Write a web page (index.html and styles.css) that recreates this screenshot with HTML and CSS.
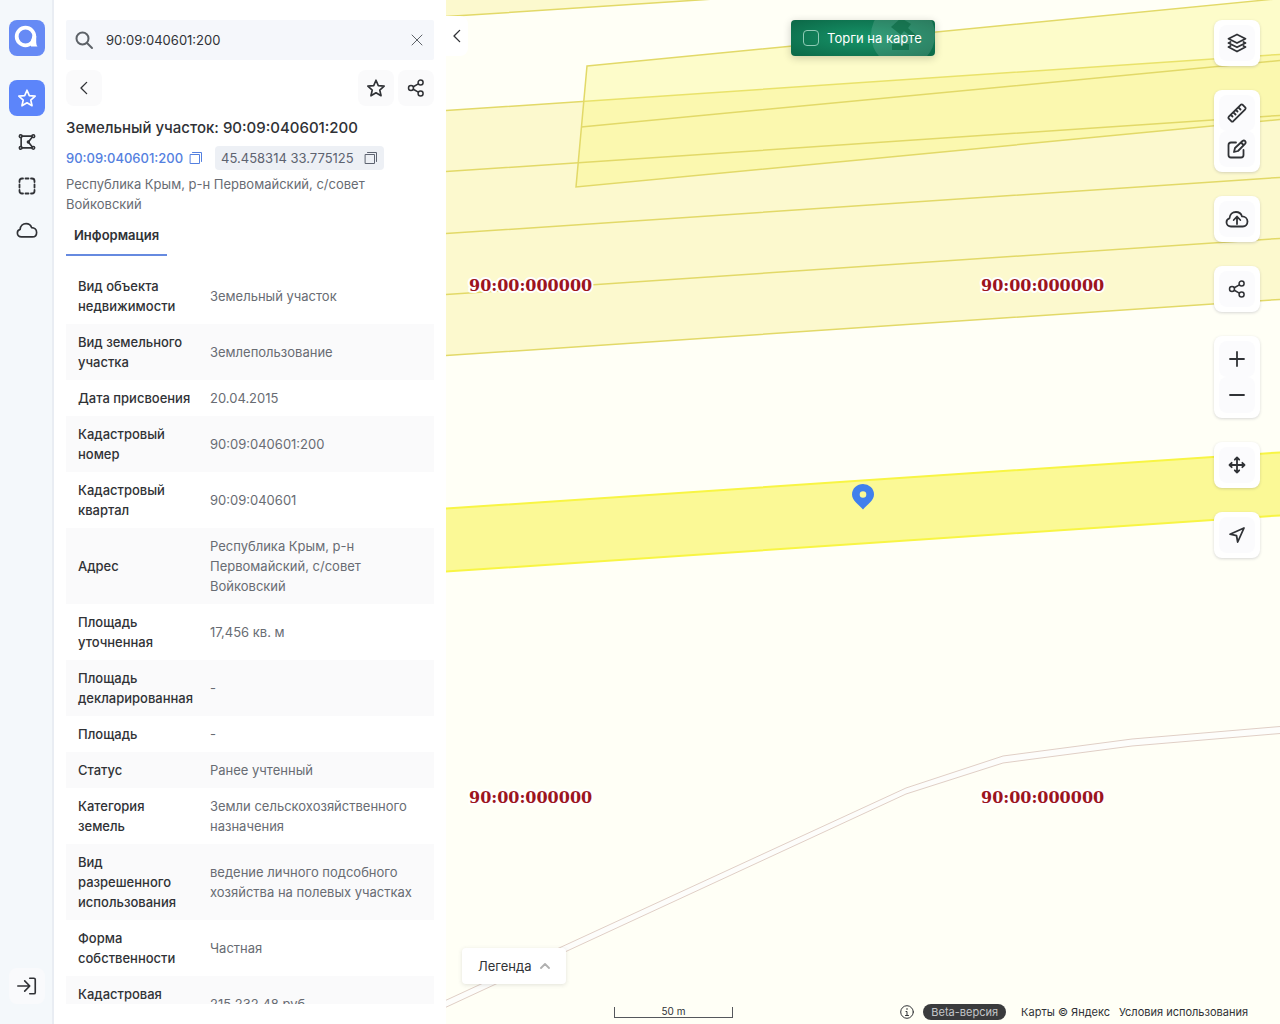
FILE: index.html
```html
<!DOCTYPE html>
<html lang="ru">
<head>
<meta charset="utf-8">
<meta name="viewport" content="width=device-width, initial-scale=1">
<title>Земельный участок: 90:09:040601:200</title>
<link rel="stylesheet" href="styles.css">
</head>
<body>
<svg class="sprite" aria-hidden="true">
  <symbol id="i-star" viewBox="0 0 24 24"><path d="M12 3.500l2.500 5.900 6.400.600-4.800 4.200 1.400 6.300L12 17.200 6.500 20.500l1.400-6.300L3.100 10l6.400-.6z"/></symbol>
  <symbol id="i-share" viewBox="0 0 24 24"><circle cx="6" cy="12" r="3"/><circle cx="17.500" cy="5.500" r="3"/><circle cx="17.500" cy="18.500" r="3"/><path d="M8.700 10.500l6.100-3.500M8.700 13.500l6.100 3.500"/></symbol>
  <symbol id="i-copy" viewBox="0 0 14 14"><path d="M1.500 3.500h9v9h-9zM3.500 1.500h9v9"/></symbol>
  <symbol id="i-cloud" viewBox="0 0 24 24"><path d="M6 19.500c-2.600 0-4.500-1.700-4.500-4.200 0-2 1.200-3.500 3-4C4.800 7.500 7.500 5 11 5c3 0 5.200 1.800 6 4.400 3 0 5.500 2.200 5.500 5.200 0 2.900-2 4.900-4.700 4.900z"/></symbol>
  <symbol id="i-left" viewBox="0 0 24 24"><path d="M15.500 4.500L8 12l7.500 7.500"/></symbol>
</svg>

<nav class="rail" aria-label="Разделы">
  <a class="rail-logo" href="#" aria-label="Главная">
    <svg viewBox="0 0 36 36" width="36" height="36"><circle cx="16.500" cy="16.500" r="8.800" fill="none" stroke="#fff" stroke-width="3.800"/><path d="M23.500 16h3.700v6.500q0 2.500 1.300 4h-6.500l-1-3z" fill="#fff"/></svg>
  </a>
  <button class="rail-btn active" aria-label="Избранное"><svg class="icon i22"><use href="#i-star"/></svg></button>
  <button class="rail-btn" aria-label="Участки">
    <svg class="icon i18" viewBox="0 0 20 20"><path d="M4.500 3.500h11M3.500 5v10M4.500 16.500h11M15.500 5L11.500 10l4 5"/><circle cx="3" cy="3.500" r="1.500"/><circle cx="17" cy="3.500" r="1.500"/><circle cx="11.500" cy="10" r="1"/><circle cx="3" cy="16.500" r="1.500"/><circle cx="17" cy="16.500" r="1.500"/></svg>
  </button>
  <button class="rail-btn" aria-label="Выделение">
    <svg class="icon i20" viewBox="0 0 20 20"><path d="M2.500 6V5q0-2.500 2.500-2.500h1M8.500 2.500h3M14 2.500h1q2.500 0 2.500 2.500v1M17.500 8.500v3M17.500 14v1q0 2.500-2.500 2.500h-1M11.500 17.500h-3M6 17.500H5Q2.500 17.500 2.500 15v-1M2.500 11.500v-3"/></svg>
  </button>
  <button class="rail-btn" aria-label="Облако"><svg class="icon i22"><use href="#i-cloud"/></svg></button>
  <button class="rail-btn login" aria-label="Войти">
    <svg class="icon i22" viewBox="0 0 24 24"><path d="M2 12h13M9.500 6.500L15 12l-5.500 5.500M15 3.500h4.500q1.500 0 1.500 1.500v14q0 1.500-1.500 1.500H15"/></svg>
  </button>
</nav>

<aside class="panel">
  <div class="search">
    <svg class="search-icon" viewBox="0 0 20 20"><circle cx="8.500" cy="8.500" r="6"/><path d="M13 13l5 5"/></svg>
    <input type="text" value="90:09:040601:200" aria-label="Поиск">
    <button class="clear" aria-label="Очистить"><svg viewBox="0 0 10 10" width="10" height="10"><path d="M0 0l10 10M10 0L0 10"/></svg></button>
  </div>
  <div class="actions">
    <button class="soft-btn back" aria-label="Назад"><svg class="icon i18"><use href="#i-left"/></svg></button>
    <button class="soft-btn" aria-label="В избранное"><svg class="icon i22"><use href="#i-star"/></svg></button>
    <button class="soft-btn" aria-label="Поделиться"><svg class="icon i20"><use href="#i-share"/></svg></button>
  </div>
  <h1>Земельный участок: 90:09:040601:200</h1>
  <div class="codes">
    <a href="#" class="code-link">90:09:040601:200 <svg class="copy"><use href="#i-copy"/></svg></a>
    <button class="coords">45.458314 33.775125 <svg class="copy"><use href="#i-copy"/></svg></button>
  </div>
  <p class="address">Республика Крым, р-н Первомайский, с/совет Войковский</p>
  <div class="tabs" role="tablist"><button class="tab" role="tab" aria-selected="true">Информация</button></div>
  <div class="details">
    <table>
      <tbody>
        <tr><th scope="row">Вид объекта недвижимости</th><td>Земельный участок</td></tr>
        <tr><th scope="row">Вид земельного участка</th><td>Землепользование</td></tr>
        <tr><th scope="row">Дата присвоения</th><td>20.04.2015</td></tr>
        <tr><th scope="row">Кадастровый номер</th><td>90:09:040601:200</td></tr>
        <tr><th scope="row">Кадастровый квартал</th><td>90:09:040601</td></tr>
        <tr><th scope="row">Адрес</th><td>Республика Крым, р-н Первомайский, с/совет Войковский</td></tr>
        <tr><th scope="row">Площадь уточненная</th><td>17,456 кв. м</td></tr>
        <tr><th scope="row">Площадь декларированная</th><td>-</td></tr>
        <tr><th scope="row">Площадь</th><td>-</td></tr>
        <tr><th scope="row">Статус</th><td>Ранее учтенный</td></tr>
        <tr><th scope="row">Категория земель</th><td>Земли сельскохозяйственного назначения</td></tr>
        <tr><th scope="row">Вид разрешенного использования</th><td>ведение личного подсобного хозяйства на полевых участках</td></tr>
        <tr><th scope="row">Форма собственности</th><td>Частная</td></tr>
        <tr><th scope="row">Кадастровая стоимость</th><td>215 232,48 руб.</td></tr>
      </tbody>
    </table>
  </div>
</aside>

<main class="map">
  <svg class="map-canvas" viewBox="446 0 834 1024" preserveAspectRatio="xMidYMid slice" role="img" aria-label="Карта участков">
    <g class="parcel">
      <path d="M440 17L714-1L440-10z"/>
      <path d="M440 111L1286 54V299L440 356z"/>
      <path d="M587 66L1286-2V119L576 187z"/>
      <path class="line" d="M440 172L1286 115M440 234L1286 177M440 295L1286 238M581 127L1286 60"/>
    </g>
    <path class="parcel-active" d="M440 509L1286 452V515L440 572z"/>
    <path class="road" d="M440 1003L559 948L906 788L1003 756L1132 739L1286 726V733L1132 746L1003 763L906 794L567 951L440 1010z"/>
    <g class="quarter">
      <text x="469" y="291">90:00:000000</text>
      <text x="981" y="291">90:00:000000</text>
      <text x="469" y="803">90:00:000000</text>
      <text x="981" y="803">90:00:000000</text>
    </g>
    <path fill="#4080ec" fill-rule="evenodd" d="M863 509.500C859 505 852 500.500 852 494.500a11 10.500 0 0 1 22 0C874 500.500 867 505 863 509.500zM863 491.200a3.300 3.300 0 1 0 0 6.600a3.300 3.300 0 1 0 0-6.600z"/>
  </svg>

  <button class="collapse" aria-label="Свернуть панель"><svg class="icon i18"><use href="#i-left"/></svg></button>

  <label class="auction">
    <svg class="auction-art" viewBox="0 0 64 36" width="64" height="36"><circle cx="32" cy="15" r="32" fill="#fff" fill-opacity=".13"/><path d="M20 7l10-9 10 6-3 4 13 12-3 2-14-11-3 4zM21 24h17v6H21z" fill="#08653f" fill-opacity=".6"/></svg>
    <input type="checkbox"><span>Торги на карте</span>
  </label>

  <div class="tools">
    <div class="tool-card"><button aria-label="Слои"><svg class="icon i20" viewBox="0 0 20 20"><path d="M10 1.500l8.500 4.200L10 10 1.500 5.700zM3.500 9L1.500 10l8.500 4.300L18.500 10l-2-1M3.500 13l-2 1L10 18.500l8.500-4.500-2-1"/></svg></button></div>
    <div class="tool-card">
      <button aria-label="Линейка"><svg class="icon i20" viewBox="0 0 20 20"><path d="M1.800 13.700L13.700 1.800q1-.8 2 0l2.500 2.500q.8 1 0 2L6.300 18.200q-1 .8-2 0l-2.500-2.500q-.8-1 0-2zM6.500 9.500l2 2M9 7l1.500 1.500M11.500 4.500l2 2M4 12l1.500 1.500"/></svg></button>
      <button aria-label="Рисовать"><svg class="icon i20" viewBox="0 0 20 20"><path d="M9 3.500H4Q1.500 3.500 1.500 6v10q0 2.500 2.500 2.500h10q2.500 0 2.500-2.500v-5M7 13l1-4 7.500-7q1.500-1 2.700.2 1 1.300-.2 2.600L11 12zM14 3.500l2.500 2.500"/></svg></button>
    </div>
    <div class="tool-card"><button aria-label="Загрузить"><svg class="icon i24" viewBox="0 0 24 24"><use href="#i-cloud"/><path d="M12 17v-7M8.700 13L12 9.500l3.300 3.500"/></svg></button></div>
    <div class="tool-card"><button aria-label="Поделиться картой"><svg class="icon i20"><use href="#i-share"/></svg></button></div>
    <div class="tool-card">
      <button aria-label="Приблизить"><svg class="icon i18" viewBox="0 0 18 18"><path d="M9 2v14M2 9h14"/></svg></button>
      <button aria-label="Отдалить"><svg class="icon i18" viewBox="0 0 18 18"><path d="M2 9h14"/></svg></button>
    </div>
    <div class="tool-card"><button aria-label="Переместить"><svg class="icon i18" viewBox="0 0 18 18"><path d="M9 1.500v15M1.500 9h15M6.800 3.700L9 1.500l2.200 2.200M6.800 14.300L9 16.500l2.200-2.200M3.700 6.800L1.500 9l2.200 2.200M14.300 6.800L16.500 9l-2.200 2.200"/></svg></button></div>
    <div class="tool-card"><button aria-label="Моё местоположение"><svg class="icon i18" viewBox="0 0 18 18"><path d="M16 2L2 8.200l6.500 1.500L9.700 16z"/></svg></button></div>
  </div>

  <button class="legend">Легенда <svg viewBox="0 0 10 6" width="10" height="6"><path d="M1 5l4-4 4 4"/></svg></button>

  <footer class="map-footer">
    <div class="scale">50 m</div>
    <svg class="info" viewBox="0 0 14 14"><circle cx="7" cy="7" r="6.300"/><path d="M7 3.500v1M6 6.500h1v4M5.500 10.500h3"/></svg>
    <span class="beta">Beta-версия</span>
    <a href="#">Карты © Яндекс</a>
    <a href="#">Условия использования</a>
  </footer>
</main>
</body>
</html>
```
FILE: styles.css
```css
* { box-sizing: border-box; }

body {
  margin: 0;
  display: flex;
  height: 100vh;
  overflow: hidden;
  font: 13px/20px Inter, "Noto Sans", sans-serif;
  color: #303236;
  background: #fff;
}

button, input {
  font: inherit;
  color: inherit;
  border: 0;
  padding: 0;
  background: none;
}
button { cursor: pointer; }
a { color: inherit; text-decoration: none; }
svg { display: block; flex: none; }

.sprite { position: absolute; width: 0; height: 0; }

.icon, .copy, .search-icon, .info, .clear path, .legend path {
  fill: none;
  stroke: currentColor;
  stroke-width: 1.8;
  stroke-linecap: round;
  stroke-linejoin: round;
}
.i18 { width: 18px; height: 18px; }
.i20 { width: 20px; height: 20px; }
.i22 { width: 22px; height: 22px; }
.i24 { width: 24px; height: 24px; }

/* Left rail */
.rail {
  flex: none;
  width: 54px;
  padding: 20px 7px 20px 9px;
  display: flex;
  flex-direction: column;
  gap: 8px;
  background: #f4f8fb;
  border-right: 2px solid #e9edf3;
}
.rail-logo {
  width: 36px;
  height: 36px;
  margin-bottom: 16px;
  border-radius: 8px;
  background: #668af5;
}
.rail-btn, .soft-btn, .tool-card button {
  display: grid;
  place-items: center;
  width: 36px;
  height: 36px;
  border-radius: 8px;
}
.rail-btn.active { background: #5c85fa; color: #fff; }
.rail-btn.login { margin-top: auto; background: #f9fafc; }

/* Object panel */
.panel {
  flex: none;
  width: 392px;
  padding: 20px 12px;
  display: flex;
  flex-direction: column;
}
.search {
  display: flex;
  align-items: center;
  height: 40px;
  padding: 0 12px 0 8px;
  background: #f5f7fb;
  border-radius: 2px;
}
.search-icon { width: 20px; height: 20px; color: #5d6268; stroke-width: 2; }
.search input {
  flex: 1;
  min-width: 0;
  margin-left: 12px;
  outline: none;
}
.clear { color: #5d6268; }
.clear svg { overflow: visible; }
.clear path { stroke-width: 1; }

.actions { display: flex; gap: 4px; margin-top: 10px; }
.soft-btn { background: #fafafb; }
.back { margin-right: auto; }

h1 {
  margin: 10px 0 0;
  font-size: 15px;
  line-height: 24px;
  font-weight: 500;
  white-space: nowrap;
}
.codes {
  display: flex;
  gap: 12px;
  height: 24px;
  margin-top: 6px;
  line-height: 24px;
}
.code-link, .coords { display: flex; align-items: center; gap: 6px; }
.code-link { color: #5480e0; font-weight: 500; }
.coords {
  gap: 10px;
  padding: 0 6px;
  background: #edf0f5;
  border-radius: 4px;
  color: #5d6370;
}
.copy { width: 14px; height: 14px; stroke-width: 1; }

.address { margin: 4px 0 0; color: #686c73; }

.tabs { display: flex; margin-top: 2px; }
.tab {
  height: 40px;
  padding: 0 8px;
  font-weight: 600;
  border-bottom: 2px solid #668ae0;
}

.details { flex: 1; min-height: 0; margin-top: 12px; overflow: hidden; }
table { width: 100%; border-collapse: collapse; table-layout: fixed; }
th, td { padding: 8px 12px; text-align: left; vertical-align: middle; }
th { width: 132px; padding-right: 4px; font-weight: 500; }
td { color: #686c73; }
tr:nth-child(even) { background: #fafafb; }

/* Map */
.map { position: relative; flex: 1; min-width: 0; overflow: hidden; background: #fffff6; }
.map-canvas { width: 100%; height: 100%; }
.parcel path { fill: #f7ee7c; fill-opacity: .33; stroke: #e2d968; stroke-width: 1.5; }
.parcel path:nth-child(3) { fill: #f9f570; }
.parcel .line { fill: none; }
.parcel-active { fill: #fbf996; stroke: #f8f544; stroke-width: 2; }
.road { fill: #fdfdfb; stroke: #e0cfc6; stroke-width: 1; }
.quarter text {
  font: bold 16px "DejaVu Serif", serif;
  fill: #9c1420;
  stroke: #fff;
  stroke-width: 4px;
  stroke-linejoin: round;
  paint-order: stroke;
}

.collapse {
  position: absolute;
  top: 16px;
  left: 0;
  display: grid;
  place-items: center;
  width: 22px;
  height: 40px;
  background: #fff;
  border-radius: 0 8px 8px 0;
}

.auction {
  position: absolute;
  top: 20px;
  left: 50%;
  transform: translateX(-50%);
  display: flex;
  align-items: center;
  gap: 8px;
  width: 144px;
  height: 36px;
  padding: 0 12px;
  overflow: hidden;
  white-space: nowrap;
  color: #fff;
  background: radial-gradient(ellipse at center, #169469, #0c6847);
  border-radius: 4px;
  box-shadow: 0 2px 8px rgba(0, 0, 0, .2);
}
.auction-art { position: absolute; right: 0; top: 0; }
.auction input {
  position: relative;
  appearance: none;
  flex: none;
  width: 16px;
  height: 16px;
  margin: 0;
  border: 1px solid #8fcbb5;
  border-radius: 4px;
}
.auction span { position: relative; }

.tools {
  position: absolute;
  top: 20px;
  right: 20px;
  display: flex;
  flex-direction: column;
  gap: 24px;
}
.tool-card {
  padding: 5px;
  background: #fff;
  border-radius: 8px;
  box-shadow: 0 1px 3px rgba(60, 60, 90, .2);
}
.tool-card button { background: #fbfbfd; }

.legend {
  position: absolute;
  left: 16px;
  bottom: 40px;
  display: flex;
  align-items: center;
  gap: 8px;
  height: 36px;
  padding: 0 16px;
  background: #fff;
  border-radius: 4px;
  box-shadow: 0 1px 4px rgba(60, 60, 60, .15);
}
.legend svg { color: #b0b0b0; }

.map-footer {
  position: absolute;
  left: 0;
  right: 0;
  bottom: 4px;
  display: flex;
  align-items: center;
  gap: 9px;
  height: 16px;
  padding: 0 32px 0 168px;
  font-size: 11px;
  line-height: 16px;
  white-space: nowrap;
}
.scale {
  width: 119px;
  height: 11px;
  margin-right: auto;
  border: 1px solid #55575c;
  border-top: 0;
  font-size: 10px;
  line-height: 8px;
  text-align: center;
}
.info { width: 14px; height: 14px; stroke-width: 1; }
.beta {
  margin-right: 6px;
  padding: 0 8px;
  border-radius: 8px;
  background: #3a3b3d;
  color: #c4c6c9;
}
```
